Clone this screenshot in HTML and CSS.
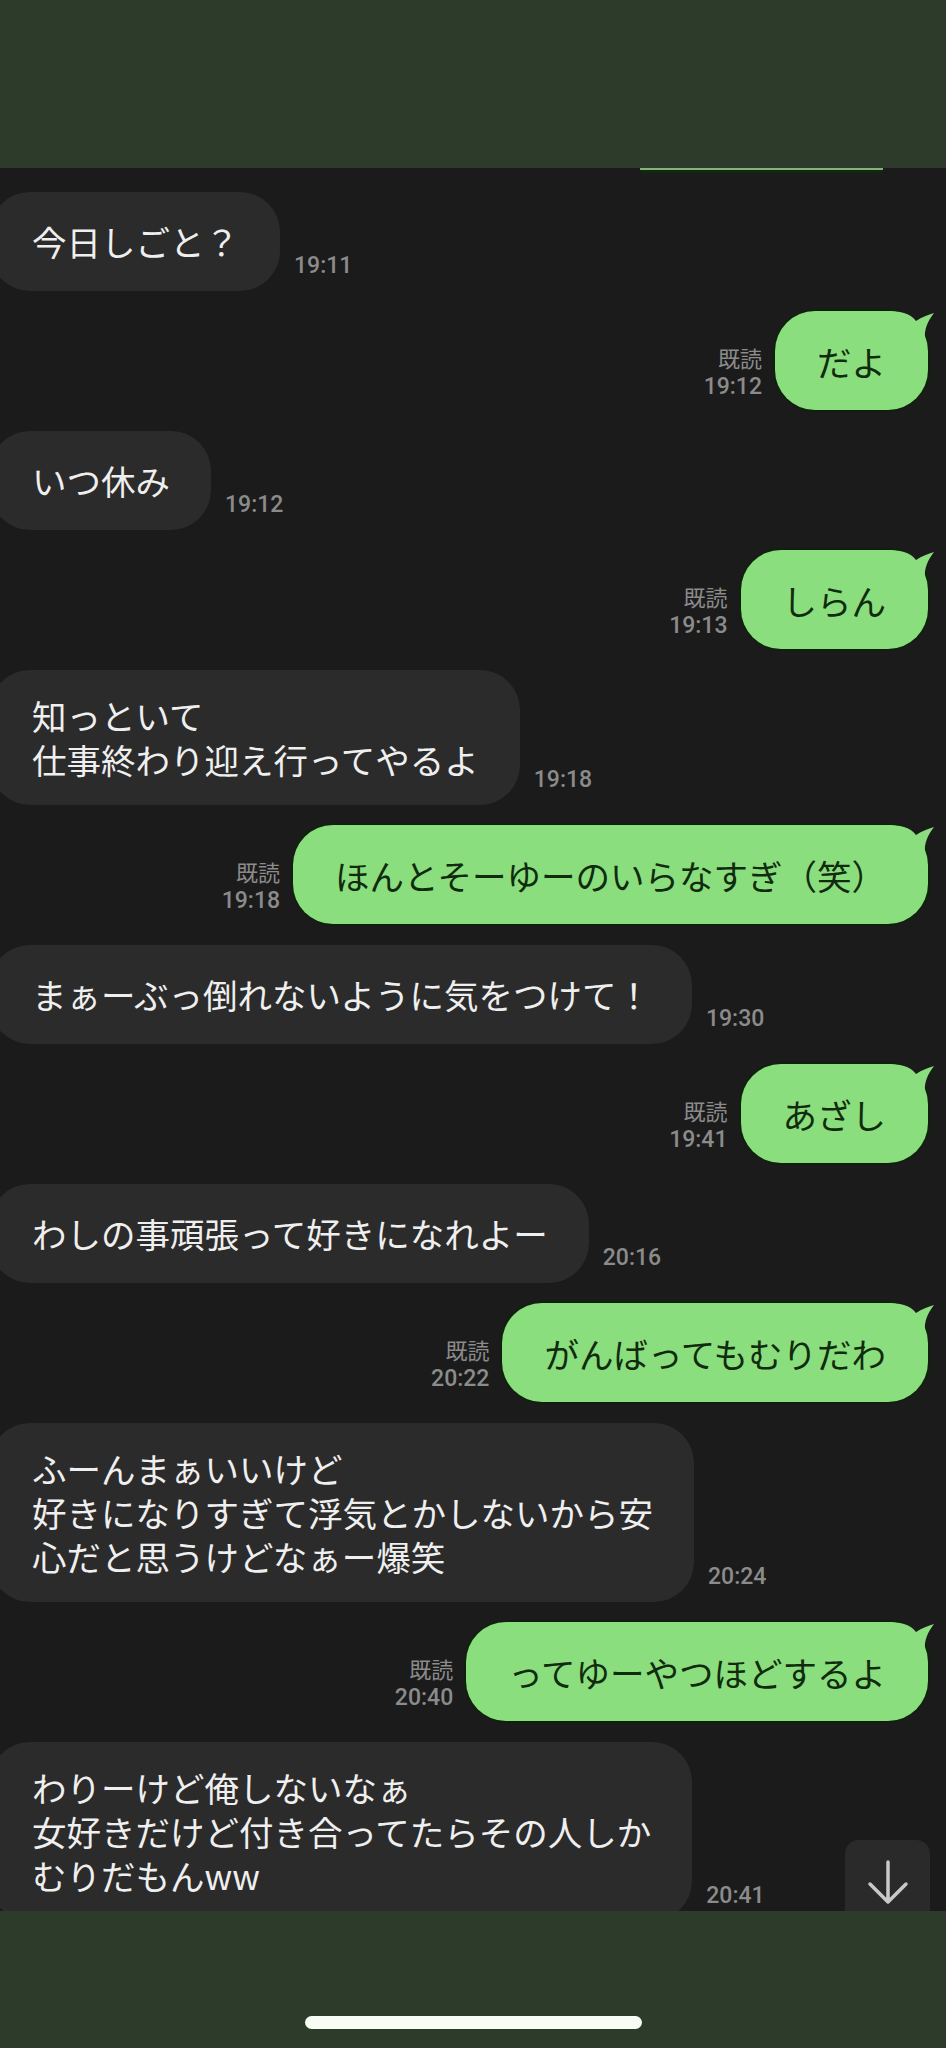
FILE: index.html
```html
<!DOCTYPE html>
<html lang="ja">
<head>
<meta charset="utf-8">
<title>トーク</title>
<link rel="stylesheet" href="styles.css">
</head>
<body>
<div class="phone">
  <header class="topbar"></header>
  <main class="chat">
    <div class="sliver"></div>

    <div class="row in">
      <div class="bubble in"><div class="txt">今日しごと？</div></div>
      <span class="time">19:11</span>
    </div>

    <div class="row out">
      <div class="meta"><span class="read">既読</span><span class="mtime">19:12</span></div>
      <div class="bubble out"><div class="txt">だよ</div><svg class="tail" viewBox="0 0 50 44" width="50" height="44"><path d="M0,2 C14,2 24,4 30,12 C36,8 42,6 48,4 C42,12 38,20 39,30 L40,44 L0,44 Z"/></svg></div>
    </div>

    <div class="row in">
      <div class="bubble in"><div class="txt">いつ休み</div></div>
      <span class="time">19:12</span>
    </div>

    <div class="row out">
      <div class="meta"><span class="read">既読</span><span class="mtime">19:13</span></div>
      <div class="bubble out"><div class="txt">しらん</div><svg class="tail" viewBox="0 0 50 44" width="50" height="44"><path d="M0,2 C14,2 24,4 30,12 C36,8 42,6 48,4 C42,12 38,20 39,30 L40,44 L0,44 Z"/></svg></div>
    </div>

    <div class="row in">
      <div class="bubble in"><div class="txt">知っといて<br>仕事終わり迎え行ってやるよ</div></div>
      <span class="time">19:18</span>
    </div>

    <div class="row out">
      <div class="meta"><span class="read">既読</span><span class="mtime">19:18</span></div>
      <div class="bubble out"><div class="txt">ほんとそーゆーのいらなすぎ（笑）</div><svg class="tail" viewBox="0 0 50 44" width="50" height="44"><path d="M0,2 C14,2 24,4 30,12 C36,8 42,6 48,4 C42,12 38,20 39,30 L40,44 L0,44 Z"/></svg></div>
    </div>

    <div class="row in">
      <div class="bubble in"><div class="txt">まぁーぶっ倒れないように気をつけて！</div></div>
      <span class="time">19:30</span>
    </div>

    <div class="row out">
      <div class="meta"><span class="read">既読</span><span class="mtime">19:41</span></div>
      <div class="bubble out"><div class="txt">あざし</div><svg class="tail" viewBox="0 0 50 44" width="50" height="44"><path d="M0,2 C14,2 24,4 30,12 C36,8 42,6 48,4 C42,12 38,20 39,30 L40,44 L0,44 Z"/></svg></div>
    </div>

    <div class="row in">
      <div class="bubble in"><div class="txt">わしの事頑張って好きになれよー</div></div>
      <span class="time">20:16</span>
    </div>

    <div class="row out">
      <div class="meta"><span class="read">既読</span><span class="mtime">20:22</span></div>
      <div class="bubble out"><div class="txt">がんばってもむりだわ</div><svg class="tail" viewBox="0 0 50 44" width="50" height="44"><path d="M0,2 C14,2 24,4 30,12 C36,8 42,6 48,4 C42,12 38,20 39,30 L40,44 L0,44 Z"/></svg></div>
    </div>

    <div class="row in">
      <div class="bubble in"><div class="txt">ふーんまぁいいけど<br>好きになりすぎて浮気とかしないから安<br>心だと思うけどなぁー爆笑</div></div>
      <span class="time">20:24</span>
    </div>

    <div class="row out">
      <div class="meta"><span class="read">既読</span><span class="mtime">20:40</span></div>
      <div class="bubble out"><div class="txt">ってゆーやつほどするよ</div><svg class="tail" viewBox="0 0 50 44" width="50" height="44"><path d="M0,2 C14,2 24,4 30,12 C36,8 42,6 48,4 C42,12 38,20 39,30 L40,44 L0,44 Z"/></svg></div>
    </div>

    <div class="row in">
      <div class="bubble in"><div class="txt">わりーけど俺しないなぁ<br>女好きだけど付き合ってたらその人しか<br>むりだもんww</div></div>
      <span class="time">20:41</span>
    </div>

    <button class="scroll-down" type="button" aria-label="最新のメッセージへ">
      <svg viewBox="0 0 85 100" width="85" height="100"><path d="M43,22 L43,62 M25,44 L43,62 L61,44" fill="none" stroke="#c9c9c9" stroke-width="3.5" stroke-linecap="round" stroke-linejoin="round"/></svg>
    </button>
  </main>
  <footer class="bottombar"><div class="home"></div></footer>
</div>
</body>
</html>
```

FILE: styles.css
```css
html, body {
  margin: 0;
  padding: 0;
  background: #1b1b1b;
}

.phone {
  width: 946px;
  height: 2048px;
  display: flex;
  flex-direction: column;
  overflow: hidden;
  font-family: "Noto Sans CJK JP", "Noto Sans", sans-serif;
}

.topbar {
  height: 168px;
  flex: none;
  background: #2d3c2a;
}

.chat {
  position: relative;
  height: 1743px;
  flex: none;
  overflow: hidden;
  background: #1b1b1b;
  display: flex;
  flex-direction: column;
  gap: 20.5px;
}

.sliver {
  align-self: flex-end;
  width: 243px;
  height: 5px;
  margin-right: 63px;
  margin-bottom: -2px;
  flex: none;
  background: linear-gradient(to bottom, #86b27e 0 2px, #0f2a0c 2px 100%);
  border-radius: 0 0 4px 4px;
}

.row {
  display: flex;
  align-items: flex-end;
  flex: none;
}

.row.out {
  justify-content: flex-end;
  padding-right: 18px;
}

.bubble {
  position: relative;
  box-sizing: border-box;
  min-height: 99px;
  display: flex;
  align-items: center;
  border-radius: 40px;
  font-size: 34.5px;
  line-height: 44px;
  white-space: nowrap;
}

.bubble .txt {
  position: relative;
  z-index: 1;
}

.bubble.in {
  margin-left: -10px;
  padding: 23.5px 41px 23.5px 42px;
  background: #2b2b2b;
  color: #efefef;
}

.bubble.out {
  padding: 23.5px 42px;
  background: #8ade7d;
  color: #112b0e;
  box-shadow: 0 0 0 1.5px #0d2309;
}

.tail {
  position: absolute;
  right: -8px;
  top: -2px;
  fill: #8ade7d;
  z-index: 0;
}

.time {
  margin-left: 14px;
  margin-bottom: 14px;
  font-family: Roboto, "Liberation Sans", sans-serif;
  font-weight: 500;
  font-size: 23px;
  line-height: 23px;
  color: #8b8b8b;
}

.meta {
  display: flex;
  flex-direction: column;
  align-items: flex-end;
  margin-right: 13px;
  margin-bottom: 9px;
  color: #8b8b8b;
  line-height: 29px;
}

.meta .read {
  font-family: "Noto Sans CJK JP", sans-serif;
  font-size: 22px;
}

.meta .mtime {
  font-family: Roboto, "Liberation Sans", sans-serif;
  font-weight: 500;
  font-size: 23px;
}

.scroll-down {
  position: absolute;
  right: 16px;
  top: 1672px;
  width: 85px;
  height: 100px;
  padding: 0;
  border: none;
  border-radius: 14px;
  background: #2a2a2a;
}

.scroll-down svg {
  display: block;
}

.bottombar {
  flex: 1;
  background: #2d3c2a;
  display: flex;
  justify-content: center;
  align-items: flex-start;
}

.home {
  margin-top: 105px;
  width: 337px;
  height: 13px;
  border-radius: 7px;
  background: #f7fcf4;
}
```
